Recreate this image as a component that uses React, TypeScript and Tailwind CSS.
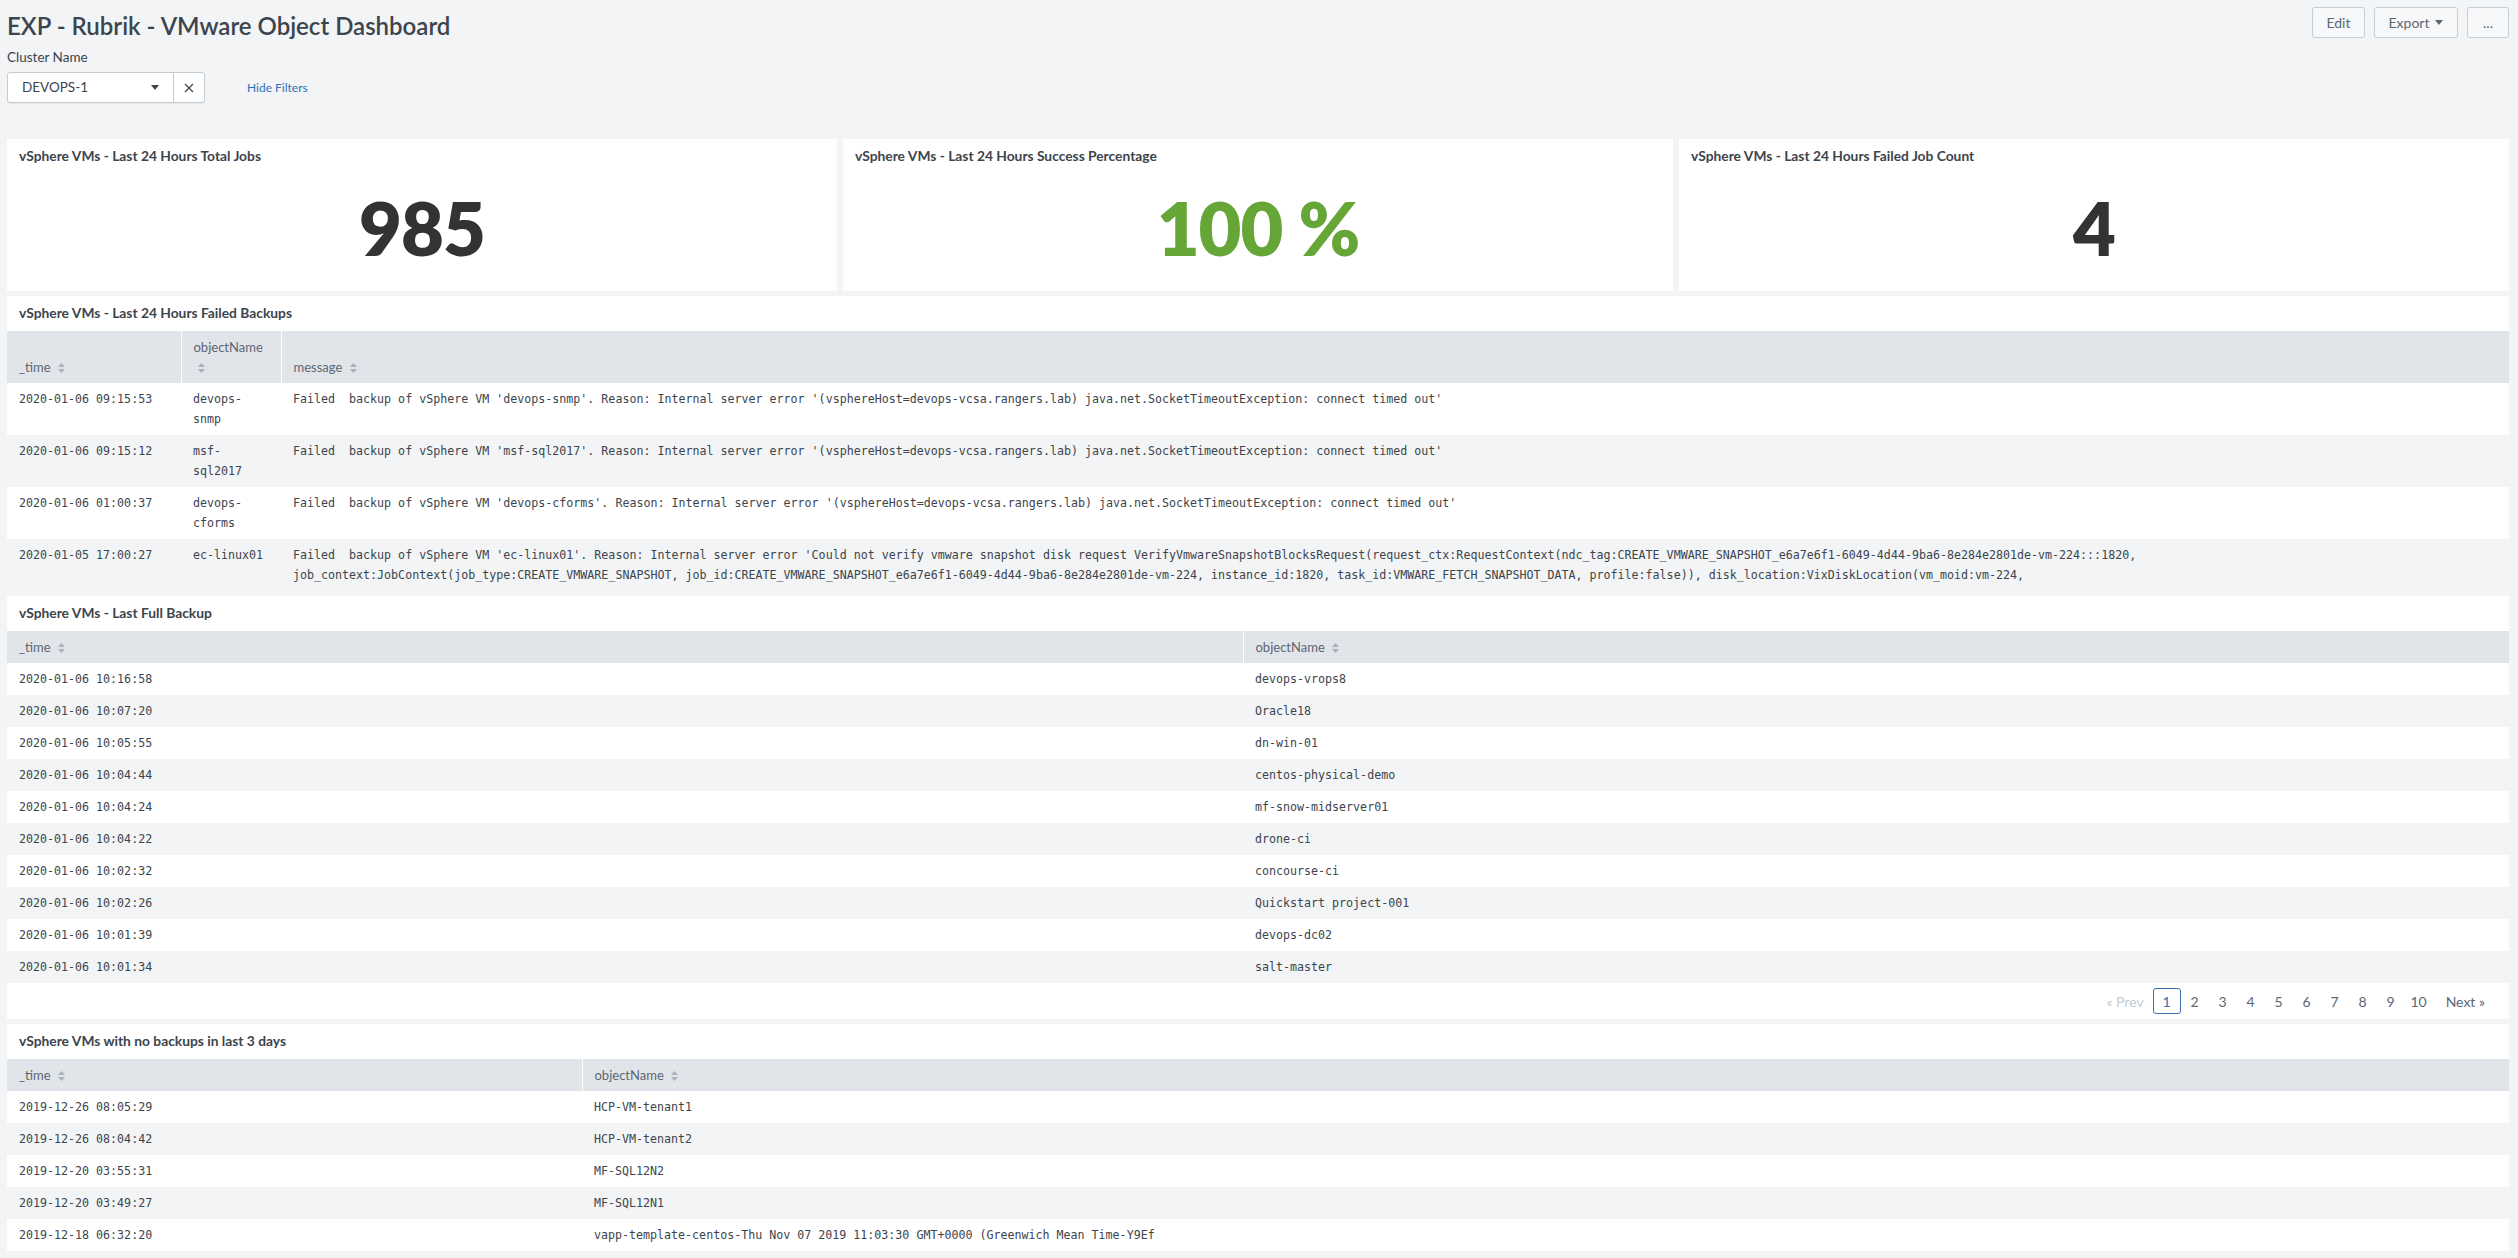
import React from "react"

type Column = { label: string; width?: string }

const failedColumns: Column[] = [
    { label: "_time", width: "w-[174px]" },
    { label: "objectName", width: "w-[100px]" },
    { label: "message" },
]

const failedRows = [
    [
        "2020-01-06 09:15:53",
        "devops-snmp",
        "Failed  backup of vSphere VM 'devops-snmp'. Reason: Internal server error '(vsphereHost=devops-vcsa.rangers.lab) java.net.SocketTimeoutException: connect timed out'",
    ],
    [
        "2020-01-06 09:15:12",
        "msf-sql2017",
        "Failed  backup of vSphere VM 'msf-sql2017'. Reason: Internal server error '(vsphereHost=devops-vcsa.rangers.lab) java.net.SocketTimeoutException: connect timed out'",
    ],
    [
        "2020-01-06 01:00:37",
        "devops-cforms",
        "Failed  backup of vSphere VM 'devops-cforms'. Reason: Internal server error '(vsphereHost=devops-vcsa.rangers.lab) java.net.SocketTimeoutException: connect timed out'",
    ],
    [
        "2020-01-05 17:00:27",
        "ec-linux01",
        "Failed  backup of vSphere VM 'ec-linux01'. Reason: Internal server error 'Could not verify vmware snapshot disk request VerifyVmwareSnapshotBlocksRequest(request_ctx:RequestContext(ndc_tag:CREATE_VMWARE_SNAPSHOT_e6a7e6f1-6049-4d44-9ba6-8e284e2801de-vm-224:::1820, job_context:JobContext(job_type:CREATE_VMWARE_SNAPSHOT, job_id:CREATE_VMWARE_SNAPSHOT_e6a7e6f1-6049-4d44-9ba6-8e284e2801de-vm-224, instance_id:1820, task_id:VMWARE_FETCH_SNAPSHOT_DATA, profile:false)), disk_location:VixDiskLocation(vm_moid:vm-224,",
    ],
]

const fullBackupRows = [
    ["2020-01-06 10:16:58", "devops-vrops8"],
    ["2020-01-06 10:07:20", "Oracle18"],
    ["2020-01-06 10:05:55", "dn-win-01"],
    ["2020-01-06 10:04:44", "centos-physical-demo"],
    ["2020-01-06 10:04:24", "mf-snow-midserver01"],
    ["2020-01-06 10:04:22", "drone-ci"],
    ["2020-01-06 10:02:32", "concourse-ci"],
    ["2020-01-06 10:02:26", "Quickstart project-001"],
    ["2020-01-06 10:01:39", "devops-dc02"],
    ["2020-01-06 10:01:34", "salt-master"],
]

const noBackupRows = [
    ["2019-12-26 08:05:29", "HCP-VM-tenant1"],
    ["2019-12-26 08:04:42", "HCP-VM-tenant2"],
    ["2019-12-20 03:55:31", "MF-SQL12N2"],
    ["2019-12-20 03:49:27", "MF-SQL12N1"],
    ["2019-12-18 06:32:20", "vapp-template-centos-Thu Nov 07 2019 11:03:30 GMT+0000 (Greenwich Mean Time-Y9Ef"],
]

const SortIcon = () => (
    <svg width="7" height="10" viewBox="0 0 7 10" className="ml-[4px] inline-block align-[-1px]">
        <path d="M3.5 0L7 4H0z M0 6H7L3.5 10z" fill="#a9b2bd" />
    </svg>
)

const PanelTitle = ({ title }: { title: string }) => (
    <div className="flex h-[35px] items-center px-[12px] text-[13.8px] font-bold text-[#3c444d]">{title}</div>
)

const StatPanel = ({ title, value, green = false }: { title: string; value: string; green?: boolean }) => (
    <div className="flex h-[152px] flex-col bg-white">
        <PanelTitle title={title} />
        <div className="flex flex-1 items-center justify-center pb-[10px]">
            <span
                className={`text-[74px] font-extrabold leading-none tracking-[-1px] ${
                    green ? "text-[#65a637]" : "text-[#333333]"
                }`}
            >
                {value}
            </span>
        </div>
    </div>
)

const DataTable = ({ columns, rows, preCol }: { columns: Column[]; rows: string[][]; preCol?: number }) => (
    <table className="w-full table-fixed border-collapse">
        <colgroup>
            {columns.map(col => (
                <col key={col.label} className={col.width} />
            ))}
        </colgroup>
        <thead>
            <tr>
                {columns.map((col, i) => (
                    <th
                        key={col.label}
                        className={`bg-[#e1e5ea] px-3 py-[6px] text-left align-bottom text-[13px] font-normal leading-5 text-[#5c6773] ${
                            i > 0 ? "border-l border-white" : ""
                        }`}
                    >
                        {col.label} <SortIcon />
                    </th>
                ))}
            </tr>
        </thead>
        <tbody>
            {rows.map((row, r) => (
                <tr key={r} className={r % 2 === 1 ? "bg-[#f2f4f5]" : "bg-white"}>
                    {row.map((cell, c) => (
                        <td
                            key={c}
                            className={`px-3 py-[6px] align-top font-['DejaVu_Sans_Mono',monospace] text-[11.65px] leading-5 text-[#3c444d] ${
                                c === preCol ? "whitespace-pre-wrap" : ""
                            }`}
                        >
                            {cell}
                        </td>
                    ))}
                </tr>
            ))}
        </tbody>
    </table>
)

const Pagination = () => (
    <div className="flex h-[36px] items-center justify-end pr-[24px] text-[14px]">
        <span className="mr-[9px] text-[#c3cbd4]">« Prev</span>
        {[1, 2, 3, 4, 5, 6, 7, 8, 9, 10].map(n => (
            <span
                key={n}
                className={`flex h-[26px] w-[28px] items-center justify-center rounded-[3px] ${
                    n === 1 ? "border border-[#3b6fab] text-[#3b6fab]" : "text-[#5c6773]"
                }`}
            >
                {n}
            </span>
        ))}
        <span className="ml-[13px] text-[#5c6773]">Next »</span>
    </div>
)

const HeaderButton = ({ children, width }: { children: React.ReactNode; width: string }) => (
    <button
        className={`flex h-[31px] ${width} items-center justify-center gap-[6px] rounded-[3px] border border-[#c8cdd4] bg-[#f7f8fa] text-[14px] text-[#5c6773]`}
    >
        {children}
    </button>
)

const App = () => {
    return (
        <div className="min-h-screen bg-[#f2f4f5] pl-[7px] pr-[9px] font-['Lato',sans-serif] text-[#3c444d]">
            <div className="flex items-start justify-between">
                <div>
                    <h1 className="pt-[11px] text-[24px] font-semibold leading-[30px]">EXP - Rubrik - VMware Object Dashboard</h1>
                    <div className="mt-[8px] text-[13.5px] leading-4">Cluster Name</div>
                    <div className="mt-[7px] flex items-center">
                        <div className="flex h-[31px] w-[198px] rounded-[3px] border border-[#c3cbd4] bg-white shadow-[0_1px_1px_rgba(0,0,0,0.06)]">
                            <div className="flex flex-1 items-center justify-between pl-[14px] pr-[14px] text-[13.5px]">
                                <span>DEVOPS-1</span>
                                <svg width="8" height="5" viewBox="0 0 8 5">
                                    <path d="M0 0H8L4 5z" fill="#3c444d" />
                                </svg>
                            </div>
                            <div className="flex w-[31px] items-center justify-center border-l border-[#c3cbd4]">
                                <svg width="10" height="10" viewBox="0 0 10 10">
                                    <path d="M1 1L9 9M9 1L1 9" stroke="#3c444d" strokeWidth="1.2" />
                                </svg>
                            </div>
                        </div>
                        <span className="ml-[42px] text-[12px] text-[#2f72b8]">Hide Filters</span>
                    </div>
                </div>
                <div className="flex gap-[9px] pt-[7px]">
                    <HeaderButton width="w-[53px]">Edit</HeaderButton>
                    <HeaderButton width="w-[84px]">
                        Export
                        <svg width="8" height="5" viewBox="0 0 8 5">
                            <path d="M0 0H8L4 5z" fill="#5c6773" />
                        </svg>
                    </HeaderButton>
                    <HeaderButton width="w-[42px]">...</HeaderButton>
                </div>
            </div>

            <div className="mt-[36px] flex flex-col gap-[5px]">
                <div className="grid grid-cols-3 gap-[6px]">
                    <StatPanel title="vSphere VMs - Last 24 Hours Total Jobs" value="985" />
                    <StatPanel title="vSphere VMs - Last 24 Hours Success Percentage" value="100 %" green />
                    <StatPanel title="vSphere VMs - Last 24 Hours Failed Job Count" value="4" />
                </div>

                <div className="bg-white">
                    <PanelTitle title="vSphere VMs - Last 24 Hours Failed Backups" />
                    <DataTable columns={failedColumns} rows={failedRows} preCol={2} />
                </div>

                <div className="bg-white">
                    <PanelTitle title="vSphere VMs - Last Full Backup" />
                    <DataTable
                        columns={[{ label: "_time", width: "w-[1236px]" }, { label: "objectName" }]}
                        rows={fullBackupRows}
                    />
                    <Pagination />
                </div>

                <div className="bg-white">
                    <PanelTitle title="vSphere VMs with no backups in last 3 days" />
                    <DataTable
                        columns={[{ label: "_time", width: "w-[575px]" }, { label: "objectName" }]}
                        rows={noBackupRows}
                    />
                </div>
            </div>
        </div>
    )
}

export default App
